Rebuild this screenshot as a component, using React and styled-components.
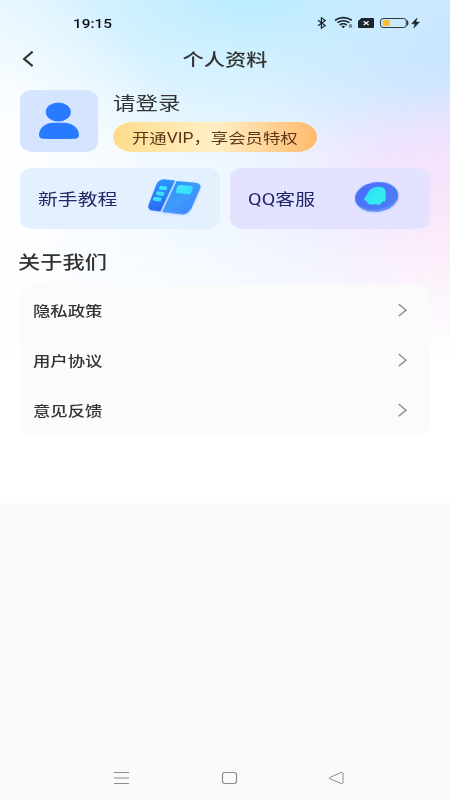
import React from "react";
import styled, { createGlobalStyle } from "styled-components";

const GlobalStyle = createGlobalStyle`
  * {
    box-sizing: border-box;
  }
  body {
    margin: 0;
    background: #fafafa;
    font-family: Roboto, "Noto Sans CJK SC", sans-serif;
    color: #333;
  }
`;

const Page = styled.div`
  width: 450px;
  height: 800px;
  display: flex;
  flex-direction: column;
  overflow: hidden;
  background: #fafafa;
`;

const Hero = styled.main`
  height: 503px;
  background:
    linear-gradient(180deg, rgba(255, 255, 255, 0) 0, rgba(255, 255, 255, 0) 210px, #fff 360px),
    radial-gradient(ellipse 170px 130px at 470px 260px, #ffe6f8 0%, rgba(255, 230, 248, 0) 100%),
    radial-gradient(ellipse 180px 80px at 465px 165px, #f5e0fd 0%, rgba(245, 224, 253, 0) 100%),
    radial-gradient(ellipse 220px 240px at -30px 200px, #fff 0%, rgba(255, 255, 255, 0.85) 30%, rgba(255, 255, 255, 0) 100%),
    radial-gradient(ellipse 330px 170px at 250px -10px, #b7ebff 0%, rgba(192, 236, 255, 0.65) 40%, rgba(205, 240, 255, 0) 100%),
    radial-gradient(ellipse 200px 130px at 460px 50px, #cbe2ff 0%, rgba(203, 226, 255, 0) 100%),
    linear-gradient(100deg, #eff8ff 0%, #eff8ff 45%, #ebebff 78%, #f0eaff 100%);
`;

// glyphs are drawn wider than tall everywhere on this screen
const Text = styled.span`
  display: inline-block;
  padding-top: ${(p) => p.$drop || 0}px;
  white-space: nowrap;
  font-size: ${(p) => p.$size}px;
  font-weight: ${(p) => p.$weight || 400};
  line-height: ${(p) => p.$line || 20}px;
  color: ${(p) => p.$color || "#333"};
  transform: scaleX(${(p) => p.$stretch || 1.25});
  transform-origin: ${(p) => p.$origin || "left"} center;
`;

const StatusBar = styled.div`
  height: 38px;
  padding: 8px 30px 0 73px;
  display: flex;
  justify-content: space-between;
  align-items: center;
`;

const StatusIcons = styled.div`
  display: flex;
  align-items: center;
  svg {
    display: block;
  }
`;

const TitleBar = styled.header`
  height: 42px;
  padding: 0 20px;
  display: grid;
  grid-template-columns: 20px 1fr 20px;
  align-items: center;
  text-align: center;
  svg {
    display: block;
  }
`;

const Title = styled.div`
  padding-top: 2px;
`;

const Profile = styled.section`
  margin-top: 10px;
  padding: 0 20px;
  height: 62px;
  display: flex;
`;

const Avatar = styled.div`
  width: 77.5px;
  height: 62px;
  border-radius: 12px / 10px;
  background: #d5e4ff;
  svg {
    display: block;
  }
`;

const ProfileInfo = styled.div`
  margin-left: 15px;
  display: flex;
  flex-direction: column;
  justify-content: space-between;
`;

const VipButton = styled.div`
  width: 204.5px;
  height: 30px;
  padding-left: 19px;
  display: flex;
  align-items: center;
  border-radius: 19px / 15px;
  background: linear-gradient(90deg, #ffdc8b 0%, #ffefc5 50%, #ffba6c 100%);
`;

const Cards = styled.section`
  margin-top: 16px;
  padding: 0 20px;
  display: grid;
  grid-template-columns: 1fr 1fr;
  gap: 10px;
`;

const Card = styled.div`
  height: 61px;
  padding-left: 17.5px;
  display: flex;
  align-items: center;
  justify-content: space-between;
  border-radius: 12px / 10px;
  background: ${(p) => p.$bg};
  svg {
    display: block;
  }
`;

const SectionTitle = styled.h2`
  margin: 22px 0 0 17.5px;
  height: 24px;
  line-height: 24px;
  font-size: 18px;
`;

const List = styled.ul`
  list-style: none;
  margin: 10px 20px 0;
  padding: 0;
  border-radius: 12px / 10px;
  background: #fbfbfb;
`;

const Row = styled.li`
  height: 50px;
  padding: 0 21px 0 12.5px;
  display: flex;
  align-items: center;
  justify-content: space-between;
`;

const NavBar = styled.nav`
  margin-top: auto;
  height: 44px;
  padding: 0 105px 0 113px;
  display: flex;
  align-items: center;
  justify-content: space-between;
  svg {
    display: block;
  }
`;

const Status = () => (
  <StatusIcons>
    <svg width="104" height="16" viewBox="316 15 104 16" fill="none">
      <path d="M318 20.2l7.2 5.4-3.8 2.6V17.8l3.8 2.6-7.2 5.4" stroke="#1c2529" strokeWidth="1.2" />
      <g stroke="#1c2529" strokeWidth="1.6">
        <path d="M335 20.2Q343.3 15 351.8 20.2" />
        <path d="M337.4 22.7Q343.3 18.8 349.4 22.7" />
        <path d="M339.7 25Q343.3 22.6 346.8 25" />
      </g>
      <path d="M341.2 26.3Q343.3 25 345.2 26.3L343.2 28.2z" fill="#1c2529" />
      <ellipse cx="350.5" cy="26" rx="1.8" ry="2" fill="#6f8b99" />
      <path d="M361.5 18H373q1 0 1 1v8q0 1-1 1H359q-1 0-1-1v-6z" fill="#1c2529" />
      <path d="M363.6 21.2l5 3.8m0-3.8l-5 3.8" stroke="#e9f7ff" strokeWidth="1.3" />
      <rect x="380.5" y="18.5" width="25.8" height="9" rx="2.6" stroke="#303a40" />
      <rect x="382.8" y="20" width="7" height="6" rx="1" fill="#f9bf2c" />
      <path d="M407 20.4q1.2.4 1.2 2.6t-1.2 2.6z" fill="#303a40" stroke="#303a40" strokeWidth=".6" />
      <path d="M417 18l-5.4 5.8h3.4l-1.2 4.3 5.6-6h-3.5z" fill="#1c2529" stroke="#1c2529" strokeWidth=".5" />
    </svg>
  </StatusIcons>
);

const BackIcon = () => (
  <svg width="20" height="20" viewBox="0 0 20 20">
    <path d="M12.6 2.6L4.1 9.9l8.5 7.2" fill="none" stroke="#333" strokeWidth="2.1" />
  </svg>
);

const UserIcon = () => (
  <svg width="77.5" height="62" viewBox="20 90 77.5 62" fill="#287bff">
    <ellipse cx="58.3" cy="112" rx="12.5" ry="9.5" />
    <path d="M39 134.8C39 127.5 46 122.7 53.5 122.7H64C72 122.7 79 128 79 134.8Q79 138.6 74.5 138.8Q59 139.3 43.5 138.8Q39 138.6 39 134.8Z" />
  </svg>
);

const BookIcon = () => (
  <svg width="76" height="61" viewBox="144 168 76 61">
    <defs>
      <linearGradient id="cover" x1="0" y1="0" x2="1" y2="1">
        <stop offset="0" stopColor="#2493ff" />
        <stop offset=".5" stopColor="#3f9bfb" />
        <stop offset="1" stopColor="#3d80ff" />
      </linearGradient>
      <linearGradient id="spine" x1="0" y1="0" x2="0" y2="1">
        <stop offset="0" stopColor="#2a95ff" />
        <stop offset="1" stopColor="#2c6af4" />
      </linearGradient>
      <linearGradient id="tab" x1="0" y1="0" x2="1" y2="1">
        <stop offset="0" stopColor="#42ecfb" />
        <stop offset="1" stopColor="#35dafc" />
      </linearGradient>
      <filter id="bookShadow" x="-20%" y="-20%" width="140%" height="150%">
        <feDropShadow dx="0" dy="1.2" stdDeviation="1.2" floodColor="#4c9dff" floodOpacity=".25" />
      </filter>
    </defs>
    <g filter="url(#bookShadow)">
      <path d="M163.5 179.2L175 180.4L160.4 211.5L151.3 210.3Q147.5 208.7 148.4 205.5L156.2 184.7Q158.5 179.4 163.5 179.2Z" fill="url(#spine)" />
      <path d="M176.6 181L196.2 182.7Q201.5 184 200.3 187.6L191.3 208.5Q187.6 214.5 183 214.4L162.2 212Z" fill="url(#cover)" />
      <path d="M200.3 187.6L191.3 208Q187.6 213.8 183 213.8L162.2 211.5" fill="none" stroke="#7396ff" strokeWidth=".7" />
    </g>
    <path d="M176 181L161.5 211.8" stroke="#a9d2ff" strokeWidth=".9" />
    <g fill="url(#tab)">
      <path d="M160.4 185.8l6.1.6q1.5.6.6 2.8l-1.1 1.4-6-.8q-1.7-.6-.9-2.2z" />
      <path d="M157.5 191.3l6.1.6q1.5.6.6 2.8l-1.1 1.4-6-.8q-1.7-.6-.9-2.2z" />
      <path d="M154.5 196.8l6.1.6q1.5.6.6 2.8l-1.1 1.4-6-.8q-1.7-.6-.9-2.2z" />
      <path d="M179.5 185.1l12 1q1.9.3 1.4 2.2l-1.7 4.5q-.8 1.7-3 1.6l-10.9-1.2q-2.1-.5-1.3-2.3l1.3-4q.5-1.7 2.2-1.8z" />
    </g>
    <path d="M192.8 188.9l-1.5 4.2q-.8 1.7-3 1.6l-10.9-1.2" fill="none" stroke="#28aef7" strokeWidth=".7" />
  </svg>
);

const QQIcon = () => (
  <svg width="84" height="61" viewBox="346 168 84 61">
    <defs>
      <linearGradient id="coin" x1="0" y1="0" x2="1" y2="1">
        <stop offset="0" stopColor="#4a6bff" />
        <stop offset="1" stopColor="#5080ee" />
      </linearGradient>
      <linearGradient id="penguin" x1="0" y1="0" x2="1" y2="1">
        <stop offset="0" stopColor="#2eddf9" />
        <stop offset="1" stopColor="#34f3ef" />
      </linearGradient>
      <filter id="coinShadow" x="-20%" y="-20%" width="140%" height="150%">
        <feDropShadow dx="0" dy="1" stdDeviation="1" floodColor="#55aaff" floodOpacity=".3" />
      </filter>
    </defs>
    <g filter="url(#coinShadow)" transform="rotate(-7 376.7 197)">
      <ellipse cx="376.7" cy="197.1" rx="21.6" ry="14.6" fill="#4672f0" />
      <ellipse cx="376.7" cy="196.5" rx="21.6" ry="14.3" fill="url(#coin)" />
      <path d="M358 203.8Q365 210.3 377 210.2Q389 209.8 395.5 203.3" fill="none" stroke="#82a9ff" strokeWidth=".7" />
    </g>
    <path
      d="M370.4 189.6C372.5 187.1 379 185.9 382.7 187.6C386 189.3 385.9 192.5 385.4 196C386 198 385.8 200.3 384.9 201.9L383 200.9C382.5 202 381.8 202.8 380.8 203.1C381.2 205 378.2 205.5 376.2 204C373 205 369 205 367.8 203.5C367 202.9 367.6 202.1 366.3 201L364.6 200.4C363.8 198.3 364.8 197 366.9 195.3C367.2 193.3 368.8 191.1 370.4 189.6Z"
      fill="url(#penguin)"
    />
  </svg>
);

const ArrowIcon = () => (
  <svg width="14" height="16" viewBox="0 0 14 16">
    <path d="M3.7 2.1L11 8.2l-7.3 6" fill="none" stroke="#999" strokeWidth="1.6" />
  </svg>
);

const rows = ["隐私政策", "用户协议", "意见反馈"];

const App = () => {
  return (
    <Page>
      <GlobalStyle />
      <Hero>
        <StatusBar>
          <Text $size={13} $weight={500} $color="#111" $stretch={1.18} $drop={2}>
            19:15
          </Text>
          <Status />
        </StatusBar>
        <TitleBar>
          <BackIcon />
          <Title>
            <Text $size={17} $weight={500} $origin="center">
              个人资料
            </Text>
          </Title>
        </TitleBar>
        <Profile>
          <Avatar>
            <UserIcon />
          </Avatar>
          <ProfileInfo>
            <Text $size={18} $line={27}>
              请登录
            </Text>
            <VipButton>
              <Text $size={14} $color="#5a3716" $drop={1} $stretch={1.24}>
                开通VIP，享会员特权
              </Text>
            </VipButton>
          </ProfileInfo>
        </Profile>
        <Cards>
          <Card $bg="#e3f1ff">
            <Text $size={16} $color="#222867" $drop={2} $stretch={1.24}>
              新手教程
            </Text>
            <BookIcon />
          </Card>
          <Card $bg="#e3e3ff">
            <Text $size={16} $color="#222867" $drop={2} $stretch={1.24}>
              QQ客服
            </Text>
            <QQIcon />
          </Card>
        </Cards>
        <SectionTitle>
          <Text $size={18} $weight={500} $line={24} $stretch={1.235}>
            关于我们
          </Text>
        </SectionTitle>
        <List>
          {rows.map((name) => (
            <Row key={name}>
              <Text $size={14} $weight={500} $drop={2} $stretch={1.24}>
                {name}
              </Text>
              <ArrowIcon />
            </Row>
          ))}
        </List>
      </Hero>
      <NavBar>
        <svg width="17" height="14" viewBox="0 0 17 14" stroke="#8d8d8d">
          <path d="M1 1.5h15M1 7h15M1 12.5h15" />
        </svg>
        <svg width="17" height="14" viewBox="0 0 17 14">
          <rect x="1.5" y="1.5" width="14" height="11" rx="2.4" fill="none" stroke="#8d8d8d" strokeWidth="1.2" />
        </svg>
        <svg width="17" height="14" viewBox="0 0 17 14">
          <path d="M1.5 6.6L13.2 1.5q1.8-.3 1.8 1v9q0 1.3-1.8.9L1.5 7.6q-.8-.5 0-1z" fill="none" stroke="#8d8d8d" />
        </svg>
      </NavBar>
    </Page>
  );
};

export default App;
